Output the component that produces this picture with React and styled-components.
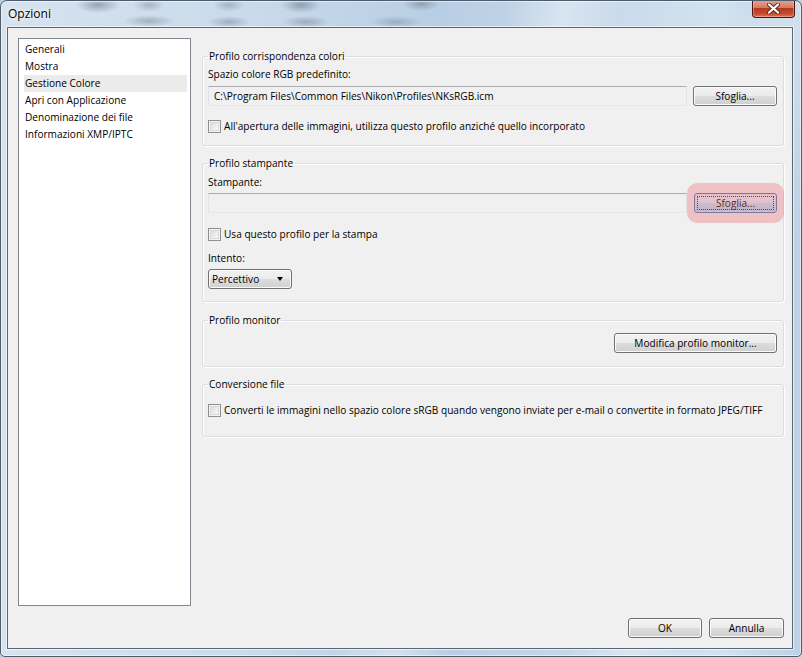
import React from "react";
import styled, { createGlobalStyle, css } from "styled-components";

const GlobalStyle = createGlobalStyle`
  html, body { margin: 0; padding: 0; }
  body {
    width: 802px;
    height: 657px;
    overflow: hidden;
    background: #b9cde2;
    font-family: "Open Sans", "Noto Sans", sans-serif;
  }
  * { box-sizing: border-box; }
`;

const FONT = css`
  font-family: "Open Sans", "Noto Sans", sans-serif;
  font-size: 10.1px;
  line-height: 14px;
  color: #000;
`;

const Window = styled.div`
  width: 802px;
  height: 657px;
  display: flex;
  flex-direction: column;
  border: 1px solid #4d5b6b;
  border-radius: 7px 7px 5px 5px;
  overflow: hidden;
  background:
    radial-gradient(ellipse 22px 8px at 97px 4px, rgba(80, 92, 110, 0.45), transparent),
    radial-gradient(ellipse 26px 6px at 148px 20px, rgba(80, 92, 110, 0.35), transparent),
    radial-gradient(ellipse 16px 7px at 148px 4px, rgba(80, 92, 110, 0.3), transparent),
    radial-gradient(ellipse 22px 6px at 228px 21px, rgba(80, 92, 110, 0.35), transparent),
    radial-gradient(ellipse 16px 7px at 228px 4px, rgba(80, 92, 110, 0.3), transparent),
    radial-gradient(ellipse 24px 6px at 305px 21px, rgba(80, 92, 110, 0.35), transparent),
    radial-gradient(ellipse 20px 8px at 300px 4px, rgba(80, 92, 110, 0.45), transparent),
    radial-gradient(ellipse 26px 6px at 395px 21px, rgba(80, 92, 110, 0.3), transparent),
    radial-gradient(ellipse 18px 7px at 420px 3px, rgba(80, 92, 110, 0.4), transparent),
    linear-gradient(105deg, transparent 52%, rgba(255,255,255,0.35) 58%, transparent 64%),
    linear-gradient(105deg, transparent 76%, rgba(255,255,255,0.3) 82%, transparent 88%),
    linear-gradient(90deg, #d6e3ef 0%, #c9dbec 30%, #b8cee4 55%, #c7d9eb 75%, #d2e2f0 90%, #bcd1e6 100%);
  box-shadow: inset 0 0 0 1px rgba(255, 255, 255, 0.55);
`;

const TitleBar = styled.div`
  height: 26px;
  display: flex;
  align-items: flex-start;
  justify-content: space-between;
  flex-shrink: 0;
`;

const Title = styled.div`
  font-family: "Open Sans", "Noto Sans", sans-serif;
  font-size: 12px;
  line-height: 16px;
  margin: 5px 0 0 7px;
  color: #000;
  text-shadow: 0 0 6px rgba(255, 255, 255, 0.9), 0 0 3px rgba(255, 255, 255, 0.9);
`;

const CloseButton = styled.div`
  width: 43px;
  height: 18px;
  margin: -1px 6px 0 0;
  border: 1px solid #4a1510;
  border-top: none;
  border-radius: 0 0 4px 4px;
  background: linear-gradient(#e6a592 0%, #d47a63 45%, #b8381f 50%, #c44a2c 80%, #d8795a 100%);
  box-shadow: inset 0 0 0 1px rgba(255, 200, 180, 0.45);
  display: flex;
  align-items: center;
  justify-content: center;
`;

const Client = styled.div`
  flex: 1;
  margin: 0 8px 7px 6px;
  border: 1px solid #5c6670;
  background: #f0f0f0;
  display: flex;
  flex-direction: column;
  padding: 10px 8px 10px 10px;
  box-shadow: 0 0 0 1px rgba(255, 255, 255, 0.6);
`;

const Main = styled.div`
  flex: 1;
  display: flex;
  gap: 11px;
  min-height: 0;
`;

const ListBox = styled.ul`
  width: 173px;
  margin: 0;
  padding: 2px 3px 0 5px;
  list-style: none;
  background: #fff;
  border: 1px solid #828790;
`;

const ListItem = styled.li`
  ${FONT};
  line-height: 17px;
  height: 17px;
  padding-left: 1px;
  white-space: nowrap;
  background: ${(p) => (p.$selected ? "#ebebeb" : "transparent")};
`;

const Groups = styled.div`
  flex: 1;
  display: flex;
  flex-direction: column;
  padding-top: 11px;
`;

const Group = styled.fieldset`
  margin: ${(p) => p.$gap || 0}px 0 0 0;
  padding: 0 6px ${(p) => p.$bottom || 12}px 5px;
  border: 1px solid #d5dfe5;
  border-radius: 3px;
  min-width: 0;
  box-shadow: inset 1px 1px 0 #fff, 1px 1px 0 #fff;
`;

const Legend = styled.legend`
  ${FONT};
  padding: 0 1px;
  margin: 0;
`;

const Label = styled.div`
  ${FONT};
  margin-top: ${(p) => p.$top || 0}px;
`;

const Row = styled.div`
  display: flex;
  align-items: center;
  gap: ${(p) => p.$gap ?? 7}px;
  margin-top: ${(p) => p.$top || 0}px;
  justify-content: ${(p) => (p.$end ? "flex-end" : "flex-start")};
`;

const TextBox = styled.div`
  ${FONT};
  flex: 1;
  height: 20px;
  padding: 2px 5px;
  border: 1px solid #dbdfe6;
  border-top-color: #abadb3;
  border-left-color: #e2e3ea;
  border-right-color: #e2e3ea;
  border-bottom-color: #e3e9ef;
  background: #f0f0f0;
  white-space: nowrap;
  overflow: hidden;
`;

const Button = styled.div`
  ${FONT};
  width: ${(p) => p.$w}px;
  height: 20px;
  display: flex;
  align-items: center;
  justify-content: center;
  flex-shrink: 0;
  border: 1px solid ${(p) => (p.$focused ? "#3c7fb1" : "#707070")};
  border-radius: 3px;
  background: ${(p) =>
    p.$focused
      ? "linear-gradient(#eaf6fd 0%, #d9f0fc 50%, #bee6fd 51%, #a7d9f5 100%)"
      : "linear-gradient(#f2f2f2 0%, #ebebeb 50%, #dddddd 51%, #cfcfcf 100%)"};
  box-shadow: inset 0 0 0 1px ${(p) => (p.$focused ? "#d2eaf8" : "#fbfbfb")};
  position: relative;
  ${(p) =>
    p.$focused &&
    css`
      &::before {
        content: "";
        position: absolute;
        inset: 2px;
        border: 1px dotted #222;
      }
    `}
`;

const HighlightSpot = styled.div`
  position: relative;
  display: flex;
  &::after {
    content: "";
    position: absolute;
    left: -7px;
    right: -7px;
    top: -10px;
    bottom: -10px;
    border-radius: 10px;
    background: rgba(235, 110, 120, 0.36);
    pointer-events: none;
  }
`;

const CheckRow = styled.label`
  ${FONT};
  display: flex;
  align-items: center;
  gap: 3px;
  margin-top: ${(p) => p.$top || 0}px;
  white-space: nowrap;
`;

const CheckBox = styled.span`
  width: 13px;
  height: 13px;
  flex-shrink: 0;
  border: 1px solid #8f8f8f;
  background: linear-gradient(135deg, #d4d4d4 0%, #f0f0f0 60%, #fbfbfb 100%);
  box-shadow: inset 0 0 0 1px #f4f4f4, inset 0 0 0 2px #d8d8d8;
`;

const Select = styled.div`
  ${FONT};
  width: 84px;
  height: 20px;
  margin-top: 4px;
  display: flex;
  align-items: center;
  justify-content: space-between;
  padding: 0 8px 0 3px;
  border: 1px solid #707070;
  border-radius: 3px;
  background: linear-gradient(#f2f2f2 0%, #ebebeb 50%, #dddddd 51%, #cfcfcf 100%);
  box-shadow: inset 0 0 0 1px #fbfbfb;
`;

const Arrow = styled.span`
  width: 0;
  height: 0;
  border-left: 3.5px solid transparent;
  border-right: 3.5px solid transparent;
  border-top: 4px solid #000;
`;

const Footer = styled.div`
  display: flex;
  justify-content: flex-end;
  gap: 7px;
  margin-top: 12px;
`;

const items = [
  "Generali",
  "Mostra",
  "Gestione Colore",
  "Apri con Applicazione",
  "Denominazione dei file",
  "Informazioni XMP/IPTC",
];

export default function App() {
  return (
    <>
      <GlobalStyle />
      <Window>
        <TitleBar>
          <Title>Opzioni</Title>
          <CloseButton>
            <svg width="15" height="11" viewBox="0 0 15 11">
              <path d="M3 1.5 L12 9.5 M12 1.5 L3 9.5" stroke="#5a2a22" strokeWidth="4" strokeLinecap="round" />
              <path d="M3 1.5 L12 9.5 M12 1.5 L3 9.5" stroke="#fff" strokeWidth="2.2" strokeLinecap="round" />
            </svg>
          </CloseButton>
        </TitleBar>
        <Client>
          <Main>
            <ListBox>
              {items.map((t) => (
                <ListItem key={t} $selected={t === "Gestione Colore"}>
                  {t}
                </ListItem>
              ))}
            </ListBox>
            <Groups>
              <Group>
                <Legend>Profilo corrispondenza colori</Legend>
                <Label $top={4}>Spazio colore RGB predefinito:</Label>
                <Row $top={5} $gap={6}>
                  <TextBox>C:\Program Files\Common Files\Nikon\Profiles\NKsRGB.icm</TextBox>
                  <Button $w={84}>Sfoglia...</Button>
                </Row>
                <CheckRow $top={13}>
                  <CheckBox />
                  All'apertura delle immagini, utilizza questo profilo anziché quello incorporato
                </CheckRow>
              </Group>

              <Group $gap={10}>
                <Legend>Profilo stampante</Legend>
                <Label $top={5}>Stampante:</Label>
                <Row $top={4} $gap={7}>
                  <TextBox />
                  <HighlightSpot>
                    <Button $w={83} $focused>
                      Sfoglia...
                    </Button>
                  </HighlightSpot>
                </Row>
                <CheckRow $top={14}>
                  <CheckBox />
                  Usa questo profilo per la stampa
                </CheckRow>
                <Label $top={10}>Intento:</Label>
                <Select>
                  Percettivo
                  <Arrow />
                </Select>
              </Group>

              <Group $gap={11} $bottom={13}>
                <Legend>Profilo monitor</Legend>
                <Row $top={6} $end>
                  <Button $w={163}>Modifica profilo monitor...</Button>
                </Row>
              </Group>

              <Group $gap={10} $bottom={19}>
                <Legend>Conversione file</Legend>
                <CheckRow $top={12}>
                  <CheckBox />
                  Converti le immagini nello spazio colore sRGB quando vengono inviate per e-mail o convertite in formato JPEG/TIFF
                </CheckRow>
              </Group>
            </Groups>
          </Main>
          <Footer>
            <Button $w={74}>OK</Button>
            <Button $w={75}>Annulla</Button>
          </Footer>
        </Client>
      </Window>
    </>
  );
}
